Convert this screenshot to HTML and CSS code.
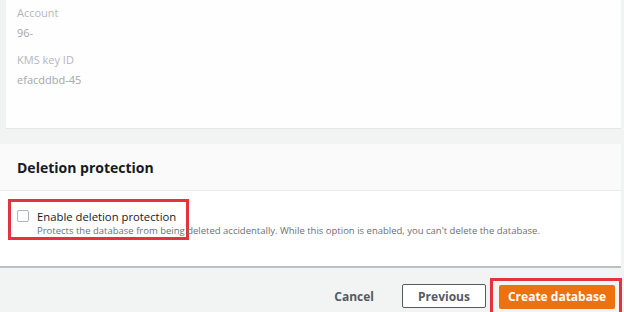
FILE: index.html
```html
<!DOCTYPE html>
<html lang="en">
<head>
    <meta charset="UTF-8">
    <title>Create database</title>
    <link rel="stylesheet" href="styles.css">
</head>
<body>
    <div class="details-card">
        <div class="field">
            <div class="field-label">Account</div>
            <div class="field-value">96-</div>
        </div>
        <div class="field">
            <div class="field-label">KMS key ID</div>
            <div class="field-value">efacddbd-45</div>
        </div>
    </div>

    <div class="section">
        <div class="section-header">
            <h2>Deletion protection</h2>
        </div>
        <div class="section-body">
            <label class="check-row highlight">
                <span class="checkbox"></span>
                <span class="check-text">
                    <span class="check-title">Enable deletion protection</span>
                    <span class="check-desc">Protects the database from being deleted accidentally. While this option is enabled, you can't delete the database.</span>
                </span>
            </label>
        </div>
    </div>

    <div class="footer">
        <button class="cancel">Cancel</button>
        <button class="previous">Previous</button>
        <div class="highlight-btn">
            <button class="create">Create database</button>
        </div>
    </div>
</body>
</html>
```

FILE: styles.css
```css
body {
    margin: 0;
    width: 624px;
    height: 312px;
    overflow: hidden;
    background-color: #f2f3f3;
    font-family: "Open Sans", Arial, sans-serif;
    color: #16191f;
}
.details-card {
    margin: 0 3px 0 6px;
    height: 129px;
    box-sizing: border-box;
    padding: 5px 11px 0;
    background-color: #fefefe;
    border-bottom: 1px solid #e4e7e7;
}
.field {
    margin-bottom: 11px;
}
.field-label {
    font-size: 11px;
    line-height: 16px;
    color: #b4b7ba;
}
.field-value {
    margin-top: 4px;
    font-size: 11px;
    line-height: 16px;
    color: #a3a7ab;
}
.section {
    margin: 15px 3px 0 0;
    background-color: white;
    border-bottom: 2px solid #b7c1c1;
}
.section-header {
    height: 47px;
    box-sizing: border-box;
    padding: 0 17px;
    display: flex;
    align-items: center;
    background-color: #fafafa;
    border-bottom: 1px solid #eaeded;
}
.section-header h2 {
    margin: 0;
    font-size: 14px;
    font-weight: 700;
    color: #16191f;
}
.section-body {
    height: 75px;
    padding: 8px 0 0 8px;
    box-sizing: border-box;
}
.check-row {
    display: inline-flex;
    gap: 8px;
    padding: 7px 0 1px 6px;
    width: 181px;
    height: 41px;
    box-sizing: border-box;
    overflow: visible;
    white-space: nowrap;
}
.highlight {
    border: 3px solid #e4333c;
}
.checkbox {
    flex: none;
    width: 12px;
    height: 12px;
    margin-top: 1px;
    border: 1px solid #aab7b8;
    border-radius: 2px;
    box-sizing: border-box;
    background-color: white;
}
.check-text {
    display: flex;
    flex-direction: column;
}
.check-title {
    font-size: 11.3px;
    line-height: 15px;
    color: #16191f;
}
.check-desc {
    font-size: 9.5px;
    line-height: 14px;
    color: #687078;
}
.footer {
    display: flex;
    align-items: center;
    justify-content: flex-end;
    padding: 10px 2px 0 0;
}
button {
    font-family: "Open Sans", Arial, sans-serif;
    font-size: 12px;
    font-weight: 700;
    cursor: pointer;
}
.cancel {
    border: none;
    background: none;
    color: #545b64;
    margin-right: 22px;
}
.previous {
    width: 84px;
    height: 24px;
    border: 1px solid #545b64;
    border-radius: 2px;
    background-color: white;
    color: #545b64;
    margin-right: 4px;
}
.highlight-btn {
    border: 3px solid #e4333c;
    padding: 3px 4px 3px 6px;
}
.create {
    width: 116px;
    height: 24px;
    border: none;
    border-radius: 2px;
    background-color: #ec7211;
    color: white;
}
```
